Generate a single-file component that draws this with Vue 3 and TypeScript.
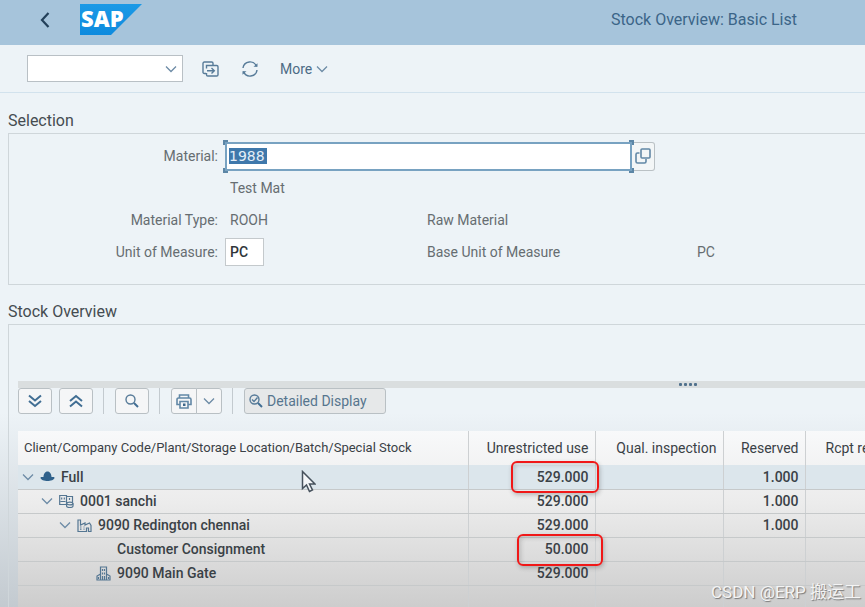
<script setup lang="ts">
import { ref } from 'vue'

interface StockRow {
  label: string
  icon: 'hat' | 'company' | 'plant' | 'storage' | ''
  level: number
  open: boolean
  unrestricted: string
  reserved: string
  marked: '' | 'first-mark' | 'second-mark'
}

const material = ref('1988')
const unit = ref('PC')
const command = ref('')

const rows: StockRow[] = [
  { label: 'Full', icon: 'hat', level: 0, open: true, unrestricted: '529.000', reserved: '1.000', marked: 'first-mark' },
  { label: '0001 sanchi', icon: 'company', level: 1, open: true, unrestricted: '529.000', reserved: '1.000', marked: '' },
  { label: '9090 Redington chennai', icon: 'plant', level: 2, open: true, unrestricted: '529.000', reserved: '1.000', marked: '' },
  { label: 'Customer Consignment', icon: '', level: 3, open: false, unrestricted: '50.000', reserved: '', marked: 'second-mark' },
  { label: '9090 Main Gate', icon: 'storage', level: 3, open: false, unrestricted: '529.000', reserved: '', marked: '' },
]
</script>

<template>
  <div class="app">
    <header class="shell">
      <button class="plain back" type="button" aria-label="Back">
        <svg width="12" height="18" viewBox="0 0 12 18"><path d="M9.500 2 3 9l6.500 7" fill="none" stroke="#23405a" stroke-width="2.200" /></svg>
      </button>
      <svg class="logo" width="62" height="32" viewBox="0 0 62 32" role="img" aria-label="SAP">
        <defs>
          <linearGradient id="sap" x1="0" y1="0" x2="0" y2="1">
            <stop offset="0" stop-color="#1b9ae6" />
            <stop offset="1" stop-color="#0d8ade" />
          </linearGradient>
        </defs>
        <path d="M0 0h62L31 31H0z" fill="url(#sap)" />
        <text class="logo-text" x="1" y="23">SAP</text>
      </svg>
      <h1>Stock Overview: Basic List</h1>
    </header>

    <div class="toolbar">
      <div class="combo">
        <input v-model="command" type="text" aria-label="Command" />
        <svg width="12" height="8" viewBox="0 0 12 8"><path d="M1 1.500 6 6.500l5-5" class="thin" /></svg>
      </div>
      <button class="plain" type="button" aria-label="New session">
        <svg width="17" height="16" viewBox="0 0 17 16">
          <path d="M4 12.500H2.300A1.300 1.300 0 0 1 1 11.200V2.300A1.300 1.300 0 0 1 2.300 1H9.700A1.300 1.300 0 0 1 11 2.300V4.500M4.500 7.500V4.500H14.700A1.300 1.300 0 0 1 16 5.800V13.700A1.300 1.300 0 0 1 14.700 15H5.800A1.300 1.300 0 0 1 4.500 13.700V12M5 9.700H12M9.500 7l2.800 2.700-2.800 2.700" class="line" />
        </svg>
      </button>
      <button class="plain refresh" type="button" aria-label="Refresh">
        <svg width="18" height="18" viewBox="0 0 18 18">
          <path d="M2 8a7 7 0 0 1 13.500-1.500M16 10a7 7 0 0 1-13.500 1.500" class="line" />
          <path d="M12.500 6.800h4V3.300zM5.500 11.200h-4v3.500z" fill="#577b99" />
        </svg>
      </button>
      <button class="plain more" type="button">
        More
        <svg width="12" height="8" viewBox="0 0 12 8"><path d="M1 1.500 6 6.500l5-5" class="thin" /></svg>
      </button>
    </div>

    <main>
      <section>
        <h2>Selection</h2>
        <form class="panel selection" @submit.prevent>
          <label for="material">Material:</label>
          <div class="material">
            <div class="focus">
              <input id="material" v-model="material" type="text" :size="4" />
              <i class="corner tl"></i><i class="corner tr"></i><i class="corner bl"></i><i class="corner br"></i>
            </div>
            <button class="help" type="button" aria-label="Value help">
              <svg width="16" height="16" viewBox="0 0 16 16">
                <path d="M4.500 5H2.500A1.500 1.500 0 0 0 1 6.500v7A1.500 1.500 0 0 0 2.500 15h7a1.500 1.500 0 0 0 1.500-1.500V11" class="bold" />
                <rect x="6" y="1" width="9" height="9" rx="1" class="bold" />
              </svg>
            </button>
          </div>
          <span class="value wide">Test Mat</span>
          <span class="caption">Material Type:</span>
          <span class="value">ROOH</span>
          <span class="text">Raw Material</span>
          <label for="unit">Unit of Measure:</label>
          <input id="unit" v-model="unit" class="unit" type="text" />
          <span class="text">Base Unit of Measure</span>
          <span class="text">PC</span>
        </form>
      </section>

      <section>
        <h2>Stock Overview</h2>
        <div class="panel stock">
          <div class="splitter"><i></i><i></i><i></i><i></i></div>
          <div class="actions">
            <button class="btn" type="button" aria-label="Expand all">
              <svg width="14" height="14" viewBox="0 0 14 14"><path d="m1 1.500 6 5 6-5M1 7l6 5 6-5" class="heavy" /></svg>
            </button>
            <button class="btn" type="button" aria-label="Collapse all">
              <svg width="14" height="14" viewBox="0 0 14 14"><path d="m1 7 6-5 6 5M1 12.500l6-5 6 5" class="heavy" /></svg>
            </button>
            <i class="sep"></i>
            <button class="btn" type="button" aria-label="Find">
              <svg width="14" height="14" viewBox="0 0 14 14"><circle cx="5.500" cy="5.500" r="4.500" class="line" /><path d="m9 9 4 4" class="heavy" /></svg>
            </button>
            <i class="sep"></i>
            <div class="split">
              <button class="btn" type="button" aria-label="Print">
                <svg width="16" height="15" viewBox="0 0 16 15">
                  <path d="M3.500 4V1h9v3M3.500 10.500H1V5.500A1.500 1.500 0 0 1 2.500 4h11A1.500 1.500 0 0 1 15 5.500v5h-2.500M4 7.500h8V14H4z" class="bold" />
                  <path d="M7 9.500h2.500v2.500H7z" fill="#3d678a" />
                </svg>
              </button>
              <button class="btn" type="button" aria-label="Print options">
                <svg width="12" height="8" viewBox="0 0 12 8"><path d="M1 1.500 6 6.500l5-5" class="thin" /></svg>
              </button>
            </div>
            <i class="sep"></i>
            <button class="btn detail" type="button">
              <svg width="14" height="14" viewBox="0 0 14 14"><circle cx="5.500" cy="5.500" r="4.500" class="line" /><path d="m3 5.500 2 2 3.500-4" class="line" /><path d="m9 9 4 4" class="heavy" /></svg>
              Detailed Display
            </button>
          </div>

          <div class="scroll">
            <table>
              <colgroup>
                <col class="c-name" /><col class="c-free" /><col class="c-qual" /><col class="c-res" /><col />
              </colgroup>
              <thead>
                <tr>
                  <th class="title">Client/Company Code/Plant/Storage Location/Batch/Special Stock</th>
                  <th>Unrestricted use</th>
                  <th>Qual. inspection</th>
                  <th>Reserved</th>
                  <th class="next">Rcpt re</th>
                </tr>
              </thead>
              <tbody>
                <tr v-for="row in rows" :key="row.label" :class="{ selected: row.level === 0 }">
                  <td class="first">
                    <div class="node" :class="'level-' + row.level">
                      <button v-if="row.open" class="plain" type="button" aria-label="Collapse">
                        <svg width="12" height="8" viewBox="0 0 12 8"><path d="M1 1.500 6 6.500l5-5" class="thin" /></svg>
                      </button>
                      <svg width="15" height="15" viewBox="0 0 15 15">
                        <path v-if="row.icon === 'hat'" d="M3.500 8C3.500 5 5 2.500 7.500 2.500S11.500 5 11.500 8c1 .3 3-.7 3 .7C14.500 10.700 10.500 12 7.500 12S.5 10.700.5 8.700C.5 7.300 2.500 8.300 3.500 8z" fill="#2f618b" />
                        <template v-else-if="row.icon === 'company'">
                          <path d="M.7 1.500H7.500V10.500H.7zM7.500 2.500h6V8M2.700 3.500v2M5.300 3.500v2M1.500 7.500h5M10.500 4v2" class="icon" />
                          <ellipse cx="10.800" cy="9.500" rx="3.200" ry="1.400" class="icon" />
                          <path d="M7.600 9.500V12c0 2 6.400 2 6.400 0V9.500" class="icon" />
                        </template>
                        <template v-else-if="row.icon === 'plant'">
                          <path d="M1 13.500V2h2.500v5L8 5v2l4.500-2L14 7.500v6h-2.500V10H9.500v3.500z" class="icon" />
                          <path d="M3 9h1.500M3 11.200h1.500M6.500 9h1M6.500 11.200h1" class="icon" />
                        </template>
                        <template v-else-if="row.icon === 'storage'">
                          <path d="M4.500 14V1h6v13M4.500 8 1 10v4h13v-4l-3.500-2" class="icon" />
                          <path d="M6.500 3v2M8.500 3v2M6.500 6.500v2M8.500 6.500v2M6.500 10v4M8.500 10v4M2.500 11v2M12.500 11v2" class="icon" />
                        </template>
                      </svg>
                      <span>{{ row.label }}</span>
                    </div>
                  </td>
                  <td>
                    {{ row.unrestricted }}
                    <i v-if="row.marked" class="mark" :class="row.marked"></i>
                  </td>
                  <td></td>
                  <td>{{ row.reserved }}</td>
                  <td></td>
                </tr>
                <tr><td></td><td></td><td></td><td></td><td></td></tr>
              </tbody>
            </table>
          </div>
        </div>
      </section>
    </main>

    <svg class="pointer" width="15" height="23" viewBox="0 0 15 23" aria-hidden="true">
      <path d="M1.500 1.500v17l4-3.500 3 6.500 3-1.500-3-6H14z" fill="#f4f6f8" stroke="#46515c" stroke-width="1.500" />
    </svg>
    <div class="watermark">CSDN @ERP 搬运工</div>
  </div>
</template>

<style>
body {
  background: #edf3f7;
  overflow: hidden;
}
</style>

<style scoped>
.app {
  position: relative;
  height: 100vh;
  overflow: hidden;
  display: flex;
  flex-direction: column;
  background: linear-gradient(#edf3f7 68%, #c3cad0);
  color: #666d71;
  font-family: Roboto, sans-serif;
  font-size: 14px;
  line-height: 20px;
}
.app * {
  box-sizing: border-box;
}
button,
input {
  font: inherit;
  color: inherit;
  margin: 0;
}
svg {
  display: block;
  flex: none;
}
h1,
h2 {
  margin: 0;
  font-weight: 400;
}
.plain {
  border: 0;
  padding: 0;
  background: none;
}
.thin {
  fill: none;
  stroke: #6d8ba6;
  stroke-width: 1.3;
}
.line {
  fill: none;
  stroke: #577b99;
  stroke-width: 1.4;
}
.bold {
  fill: none;
  stroke: #6288a6;
  stroke-width: 1.6;
}
.heavy {
  fill: none;
  stroke: #416e93;
  stroke-width: 2;
}
.icon {
  fill: none;
  stroke: #547692;
  stroke-width: 1.2;
}
.shell {
  flex: none;
  display: flex;
  align-items: center;
  height: 45px;
  padding: 0 68px 5px 39px;
  background: #a6c4db;
}
.logo {
  margin-left: 29px;
}
.logo-text {
  font: 800 22px "Open Sans", sans-serif;
  fill: #fff;
}
h1 {
  margin-left: auto;
  font-size: 16px;
  color: #3b6588;
}
.toolbar {
  flex: none;
  display: flex;
  align-items: center;
  height: 48px;
  padding-left: 27px;
  border-bottom: 1px solid #d2e2ed;
}
.combo {
  display: flex;
  align-items: center;
  width: 156px;
  height: 27px;
  margin-right: 19px;
  padding-right: 5px;
  border: 1px solid #b9c0c5;
  background: #fff;
}
.combo input {
  flex: 1;
  min-width: 0;
  border: 0;
  outline: 0;
  background: none;
}
.refresh {
  margin: 0 21px 0 22px;
}
.more {
  display: flex;
  align-items: center;
  gap: 4px;
  color: #4c6b85;
}
main {
  flex: 1;
  min-height: 0;
  display: flex;
  flex-direction: column;
  padding: 16px 0 0 8px;
}
h2 {
  font-size: 16px;
  line-height: 24px;
  color: #454c51;
}
.panel {
  border: 1px solid #cfd6da;
  border-right: 0;
}
.selection {
  display: grid;
  grid-template-columns: 209px 200px 270px 1fr;
  grid-template-rows: repeat(4, 32px);
  align-items: center;
  height: 152px;
  padding-top: 6px;
  margin-bottom: 15px;
}
.selection label,
.caption {
  grid-column: 1;
  text-align: right;
}
.material {
  grid-column: 2 / 5;
  display: flex;
  margin-left: 7px;
}
.focus {
  position: relative;
  width: 407px;
  height: 29px;
  padding: 4px 2px;
  border: 2px solid #78a2c1;
  background: #fff;
}
.focus input {
  display: block;
  width: 38px;
  height: 16px;
  padding: 0;
  border: 0;
  outline: 0;
  background: #3f78ab;
  color: #e4eef7;
  font: 14px/16px "DejaVu Sans", sans-serif;
}
.corner {
  position: absolute;
  width: 5px;
  height: 5px;
  border: 0 solid #5c86a6;
}
.tl { top: -4px; left: -4px; border-width: 2px 0 0 2px; }
.tr { top: -4px; right: -4px; border-width: 2px 2px 0 0; }
.bl { bottom: -4px; left: -4px; border-width: 0 0 2px 2px; }
.br { bottom: -4px; right: -4px; border-width: 0 2px 2px 0; }
.help {
  display: flex;
  align-items: center;
  justify-content: center;
  width: 23px;
  padding: 0;
  border: 1px solid #bac1c5;
  border-left: 0;
  border-radius: 0 3px 3px 0;
  background: #f3f6f7;
}
.value {
  padding-left: 12px;
}
.wide {
  grid-column: 2 / 5;
}
.text {
  padding-left: 9px;
}
.unit {
  width: 39px;
  height: 28px;
  margin-left: 7px;
  padding: 0 4px;
  border: 1px solid #c4c9cc;
  outline: 0;
  background: #fff;
  color: #30363a;
  font-weight: 500;
}
.stock {
  height: 300px;
  padding: 56px 0 0 9px;
}
.splitter {
  display: flex;
  align-items: center;
  gap: 2px;
  height: 7px;
  padding-left: 661px;
  background: #dadedf;
}
.splitter i {
  width: 3px;
  height: 3px;
  border-radius: 1px;
  background: #50718d;
}
.actions {
  display: flex;
  align-items: center;
}
.btn {
  display: flex;
  align-items: center;
  justify-content: center;
  width: 34px;
  height: 26px;
  padding: 0;
  border: 1px solid #b9c0c4;
  border-radius: 3px;
  background: #f5f6f7;
}
.btn + .btn {
  margin-left: 7px;
}
.sep {
  width: 1px;
  height: 26px;
  margin: 0 11px 0 10px;
  background: #c3cacf;
}
.split {
  display: flex;
}
.split .btn {
  width: 26px;
  border-radius: 3px 0 0 3px;
}
.split .btn + .btn {
  margin-left: -1px;
  border-radius: 0 3px 3px 0;
}
.btn.detail {
  width: 142px;
  justify-content: flex-start;
  gap: 4px;
  padding-left: 4px;
  background: #e6e8e9;
  color: #56758e;
}
.scroll {
  margin-top: 17px;
  overflow: hidden;
  background: linear-gradient(#f8f9fa, #ececec 40%, #cccccc);
}
table {
  width: 100%;
  min-width: 940px;
  table-layout: fixed;
  border-collapse: collapse;
  color: #3a4146;
}
.c-name { width: 450px; }
.c-free { width: 127px; }
.c-qual { width: 128px; }
.c-res { width: 82px; }
th,
td {
  position: relative;
  padding: 0 6px;
  border-right: 1px solid #cdd0d2;
  text-align: right;
  white-space: nowrap;
}
th {
  height: 34px;
  font-weight: 400;
}
td {
  height: 24px;
  border-bottom: 1px solid #c6c9ca;
  font-weight: 500;
}
.title {
  font-size: 13px;
  text-align: left;
}
.next {
  padding-left: 20px;
  text-align: left;
}
.first {
  padding-left: 4px;
  text-align: left;
}
.selected td {
  background: #dce6ec;
}
.node {
  display: flex;
  align-items: center;
  gap: 6px;
}
.level-1 { padding-left: 19px; }
.level-2 { padding-left: 37px; }
.level-3 { padding-left: 74px; }
.mark {
  position: absolute;
  top: -4px;
  right: -4px;
  width: 88px;
  height: 32px;
  border: 2px solid #f01818;
  border-radius: 6px;
  box-shadow: 1px 2px 4px rgba(60, 60, 60, 0.3), inset 2px 2px 4px rgba(60, 60, 60, 0.2);
  z-index: 1;
}
.second-mark {
  right: -8px;
  width: 86px;
}
.pointer {
  position: absolute;
  left: 301px;
  top: 470px;
}
.watermark {
  position: absolute;
  right: 4px;
  bottom: 3px;
  color: #f4f4f4;
  font: 17px/24px Roboto, "Noto Sans CJK SC", sans-serif;
  text-shadow: 1px 1px 1px #777;
}
</style>
